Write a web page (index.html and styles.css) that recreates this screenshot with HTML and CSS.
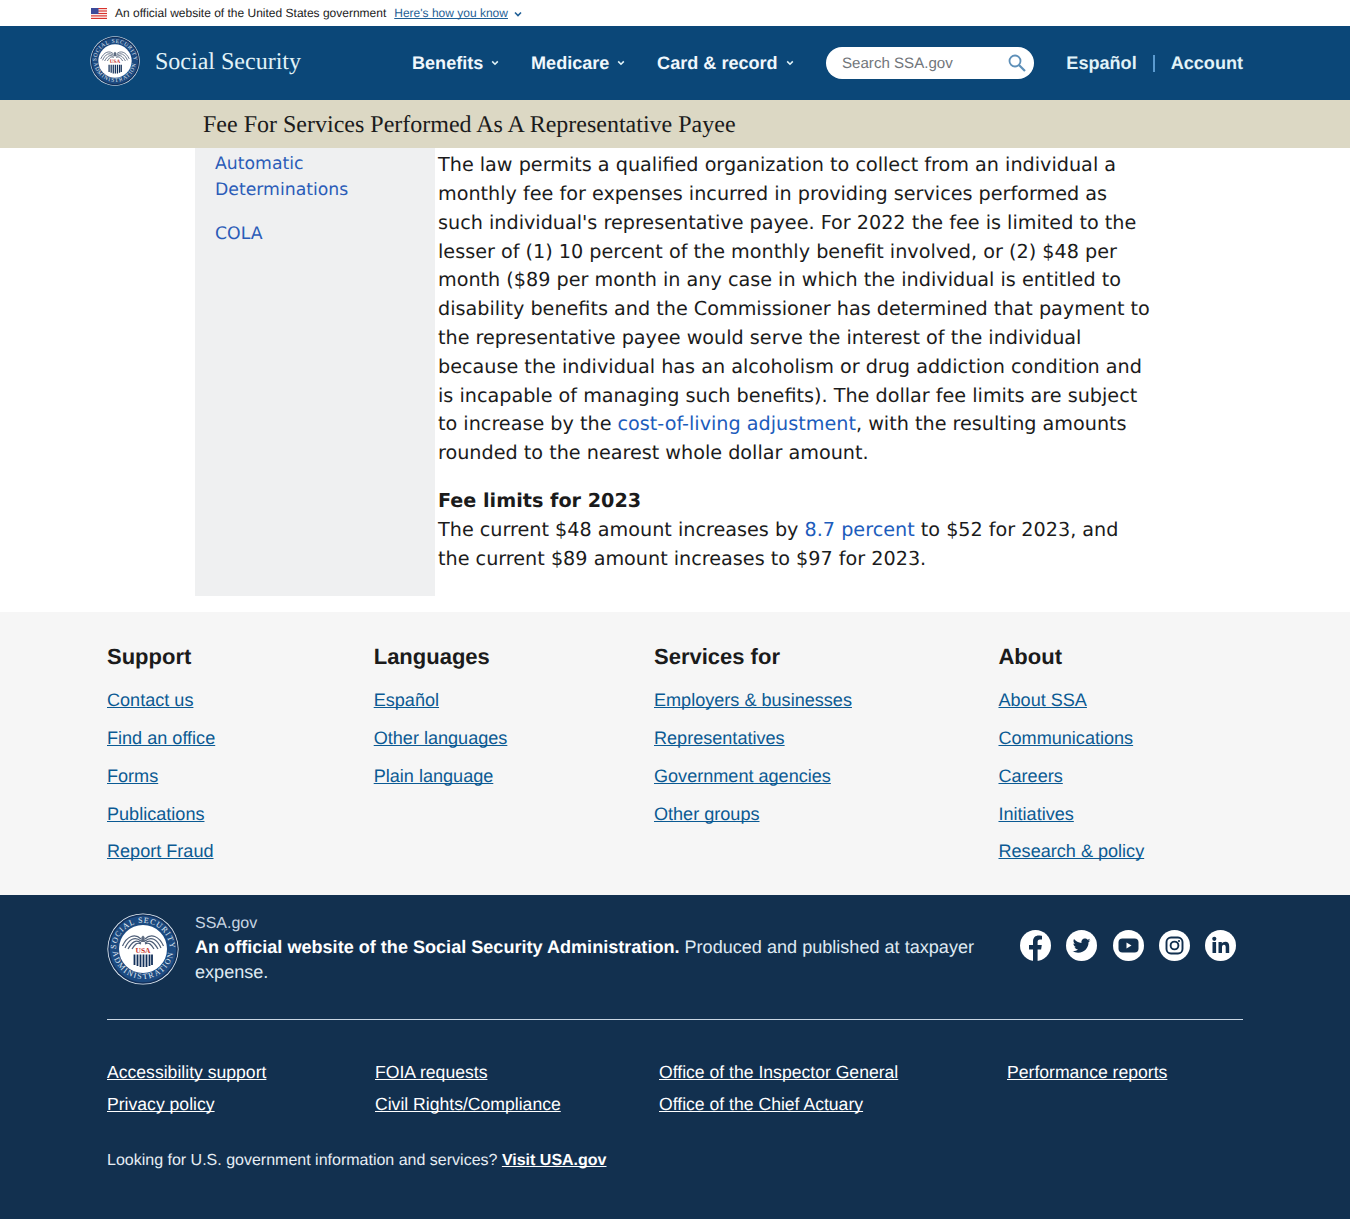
FILE: index.html
```html
<!DOCTYPE html>
<html lang="en">
<head>
    <meta charset="UTF-8">
    <meta name="viewport" content="width=device-width, initial-scale=1.0">
    <title>Fee For Services Performed As A Representative Payee</title>
    <link rel="stylesheet" href="styles.css">
</head>
<body>

    <div class="gov-banner">
        <svg class="flag" width="16" height="11" viewBox="0 0 16 11">
            <rect width="16" height="11" fill="#fff"/>
            <rect width="16" height="1.2" fill="#d8322c"/>
            <rect y="2.4" width="16" height="1.2" fill="#d8322c"/>
            <rect y="4.9" width="16" height="1.2" fill="#d8322c"/>
            <rect y="7.3" width="16" height="1.2" fill="#d8322c"/>
            <rect y="9.8" width="16" height="1.2" fill="#d8322c"/>
            <rect width="7.5" height="6" fill="#3c4a9a"/>
        </svg>
        <span class="gov-text">An official website of the United States government</span>
        <a class="gov-link" href="#">Here's how you know</a>
        <svg class="gov-chevron" width="10" height="10" viewBox="0 0 10 10"><path d="M2 3.5 L5 6.5 L8 3.5" fill="none" stroke="#1f5f96" stroke-width="1.6"/></svg>
    </div>

    <header class="site-header">
        <a class="brand" href="#">
            <svg class="seal" width="50" height="50" viewBox="0 0 72 72">
                <use href="#ssa-seal"/>
            </svg>
            <span class="brand-name">Social Security</span>
        </a>
        <nav class="main-nav">
            <a href="#">Benefits <svg width="10" height="10" viewBox="0 0 10 10"><path d="M2.2 3.4 L5 6.2 L7.8 3.4" fill="none" stroke="#e1f3f8" stroke-width="1.6"/></svg></a>
            <a href="#">Medicare <svg width="10" height="10" viewBox="0 0 10 10"><path d="M2.2 3.4 L5 6.2 L7.8 3.4" fill="none" stroke="#e1f3f8" stroke-width="1.6"/></svg></a>
            <a href="#">Card &amp; record <svg width="10" height="10" viewBox="0 0 10 10"><path d="M2.2 3.4 L5 6.2 L7.8 3.4" fill="none" stroke="#e1f3f8" stroke-width="1.6"/></svg></a>
        </nav>
        <form class="search">
            <span class="search-text">Search SSA.gov</span>
            <svg width="20" height="20" viewBox="0 0 20 20"><circle cx="8" cy="8" r="5.5" fill="none" stroke="#5d8fb8" stroke-width="1.8"/><path d="M12 12 L18 18" stroke="#5d8fb8" stroke-width="2.2"/></svg>
        </form>
        <div class="utility">
            <a href="#">Español</a>
            <span class="divider"></span>
            <a href="#">Account</a>
        </div>
    </header>

    <div class="title-bar">
        <h1>Fee For Services Performed As A Representative Payee</h1>
    </div>

    <main class="content">
        <aside class="side-nav">
            <a href="#">Automatic Determinations</a>
            <a href="#">COLA</a>
        </aside>
        <article class="article">
            <p>The law permits a qualified organization to collect from an individual a monthly fee for expenses incurred in providing services performed as such individual's representative payee. For 2022 the fee is limited to the lesser of (1) 10 percent of the monthly benefit involved, or (2) $48 per month ($89 per month in any case in which the individual is entitled to disability benefits and the Commissioner has determined that payment to the representative payee would serve the interest of the individual because the individual has an alcoholism or drug addiction condition and is incapable of managing such benefits). The dollar fee limits are subject to increase by the <a href="#">cost-of-living adjustment</a>, with the resulting amounts rounded to the nearest whole dollar amount.</p>
            <p><strong>Fee limits for 2023</strong><br>The current $48 amount increases by <a href="#">8.7 percent</a> to $52 for 2023, and the current $89 amount increases to $97 for 2023.</p>
        </article>
    </main>

    <section class="footer-links">
        <div class="footer-col">
            <h3>Support</h3>
            <a href="#">Contact us</a>
            <a href="#">Find an office</a>
            <a href="#">Forms</a>
            <a href="#">Publications</a>
            <a href="#">Report Fraud</a>
        </div>
        <div class="footer-col">
            <h3>Languages</h3>
            <a href="#">Español</a>
            <a href="#">Other languages</a>
            <a href="#">Plain language</a>
        </div>
        <div class="footer-col">
            <h3>Services for</h3>
            <a href="#">Employers &amp; businesses</a>
            <a href="#">Representatives</a>
            <a href="#">Government agencies</a>
            <a href="#">Other groups</a>
        </div>
        <div class="footer-col">
            <h3>About</h3>
            <a href="#">About SSA</a>
            <a href="#">Communications</a>
            <a href="#">Careers</a>
            <a href="#">Initiatives</a>
            <a href="#">Research &amp; policy</a>
        </div>
    </section>

    <footer class="site-footer">
        <div class="identity">
            <svg class="footer-seal" width="72" height="72" viewBox="0 0 72 72">
                <defs>
                    <g id="ssa-seal">
                        <circle cx="36" cy="36" r="35.6" fill="#e8f0f7"/>
                        <circle cx="36" cy="36" r="34.8" fill="#12305a"/>
                        <circle cx="36" cy="36" r="33.2" fill="#1c4a80"/>
                        <circle cx="36" cy="36" r="24" fill="#fff"/>
                        <path id="seal-top" d="M9.5 42 A27 27 0 1 1 62.5 42" fill="none"/>
                        <path id="seal-bottom" d="M6 30 A30.5 30.5 0 1 0 66 30" fill="none"/>
                        <text class="seal-text"><textPath href="#seal-top" startOffset="50%" text-anchor="middle">SOCIAL SECURITY</textPath></text>
                        <text class="seal-text seal-text-wide"><textPath href="#seal-bottom" startOffset="50%" text-anchor="middle">ADMINISTRATION</textPath></text>
                        <path d="M34.5 24 L36 22.5 L37.5 24 L38 29 L34 29 Z" fill="#5d6b80"/>
                        <path d="M34 26 C28 20 20 23 15.5 33 M34 28 C28 23 22 26 18 35 M34 30 C29 26 25 29 21 36 M34 31 C30 29 28 31 25 36 M38 26 C44 20 52 23 56.5 33 M38 28 C44 23 50 26 54 35 M38 30 C43 26 47 29 51 36 M38 31 C42 29 44 31 47 36" fill="none" stroke="#4f5f78" stroke-width="1.2"/>
                        <text class="seal-usa" x="36" y="39.5" text-anchor="middle">USA</text>
                        <path d="M27.5 41.5 V52 M30.5 41.5 V53 M33.5 41.5 V54 M36.5 41.5 V54 M39.5 41.5 V54 M42.5 41.5 V53 M45 41.5 V52" stroke="#12305a" stroke-width="1.8"/>
                    </g>
                </defs>
                <use href="#ssa-seal"/>
            </svg>
            <div class="identity-text">
                <div class="identity-site">SSA.gov</div>
                <div class="identity-line"><strong>An official website of the Social Security Administration.</strong> Produced and published at taxpayer expense.</div>
            </div>
            <div class="social">
                <svg width="31" height="31" viewBox="0 0 31 31"><circle cx="15.5" cy="15.5" r="15.5" fill="#fff"/><path d="M13 31 V19.5 H9 V15 H13 V11.5 C13 7.6 15.3 5.5 18.8 5.5 C20.5 5.5 22 5.8 22 5.8 V9.6 H20 C18.1 9.6 17.6 10.8 17.6 12 V15 H21.8 L21.1 19.5 H17.6 V31 Z" fill="#12304f"/></svg>
                <svg width="31" height="31" viewBox="0 0 31 31"><circle cx="15.5" cy="15.5" r="15.5" fill="#fff"/><path d="M24.5 10.2 C23.8 10.5 23.1 10.7 22.4 10.8 C23.2 10.3 23.7 9.6 24 8.8 C23.3 9.2 22.5 9.5 21.7 9.7 C21 9 20 8.5 19 8.5 C16.7 8.5 15 10.6 15.5 12.9 C12.5 12.7 9.8 11.3 8 9 C7 10.7 7.5 12.8 9.1 13.9 C8.5 13.9 7.9 13.7 7.4 13.4 C7.4 15.1 8.6 16.7 10.3 17 C9.8 17.2 9.2 17.2 8.6 17.1 C9.1 18.6 10.4 19.6 12 19.6 C10.4 20.8 8.5 21.3 6.6 21.1 C8.2 22.1 10.1 22.7 12.1 22.7 C18.6 22.7 22.7 17.2 22.5 12.2 C23.3 11.6 24 11 24.5 10.2 Z" fill="#12304f"/></svg>
                <svg width="31" height="31" viewBox="0 0 31 31"><circle cx="15.5" cy="15.5" r="15.5" fill="#fff"/><rect x="5.5" y="8.5" width="20" height="14" rx="4" fill="#12304f"/><path d="M13.5 12.5 L18.5 15.5 L13.5 18.5 Z" fill="#fff"/></svg>
                <svg width="31" height="31" viewBox="0 0 31 31"><circle cx="15.5" cy="15.5" r="15.5" fill="#fff"/><rect x="7.5" y="7.5" width="16" height="16" rx="4.5" fill="none" stroke="#12304f" stroke-width="1.9"/><circle cx="15.5" cy="15.5" r="3.9" fill="none" stroke="#12304f" stroke-width="1.9"/><circle cx="20" cy="11" r="1.1" fill="#12304f"/></svg>
                <svg width="31" height="31" viewBox="0 0 31 31"><circle cx="15.5" cy="15.5" r="15.5" fill="#fff"/><rect x="7.5" y="12" width="3.6" height="11" fill="#12304f"/><circle cx="9.3" cy="8.8" r="2.1" fill="#12304f"/><path d="M13.5 12 H16.8 V13.6 C17.5 12.4 18.8 11.7 20.3 11.7 C23.2 11.7 24.2 13.6 24.2 16.5 V23 H20.7 V17.2 C20.7 15.7 20.3 14.7 18.9 14.7 C17.6 14.7 17 15.7 17 17.2 V23 H13.5 Z" fill="#12304f"/></svg>
            </div>
        </div>
        <hr class="footer-rule">
        <div class="legal-links">
            <a href="#">Accessibility support</a>
            <a href="#">FOIA requests</a>
            <a href="#">Office of the Inspector General</a>
            <a href="#">Performance reports</a>
            <a href="#">Privacy policy</a>
            <a href="#">Civil Rights/Compliance</a>
            <a href="#">Office of the Chief Actuary</a>
        </div>
        <p class="usa-gov">Looking for U.S. government information and services? <a href="#">Visit USA.gov</a></p>
    </footer>

</body>
</html>
```

FILE: styles.css
```css
body {
    font-family: "Liberation Sans", Arial, sans-serif;
    margin: 0;
    padding: 0;
    background-color: #fff;
    color: #1b1b1b;
    text-rendering: geometricPrecision;
}
a {
    text-decoration-skip-ink: none;
}

/* top banner */
.gov-banner {
    height: 26px;
    padding-left: 91px;
    display: flex;
    align-items: center;
    font-size: 12px;
    box-sizing: border-box;
}
.flag {
    margin-right: 8px;
}
.gov-link {
    margin-left: 8px;
    color: #1f5f96;
}
.gov-chevron {
    margin-left: 5px;
    margin-top: 2px;
}

/* header */
.site-header {
    height: 74px;
    background-color: #0b4778;
    display: flex;
    align-items: center;
    padding: 0 107px 0 90px;
}
.brand {
    display: flex;
    align-items: center;
    text-decoration: none;
    width: 322px;
    flex: none;
}
.seal {
    flex: none;
    margin-top: -4px;
}
.brand-name {
    margin-left: 15px;
    margin-top: -2px;
    font-family: "Liberation Serif", serif;
    font-size: 24px;
    color: #e1f3f8;
}
.main-nav {
    display: flex;
    gap: 30.7px;
    width: 414px;
    flex: none;
}
.main-nav a {
    display: flex;
    align-items: center;
    gap: 7px;
    color: #f0f7fc;
    font-size: 18.08px;
    font-weight: bold;
    text-decoration: none;
}
.search {
    width: 208px;
    height: 32px;
    flex: none;
    margin: 0;
    padding: 0 7px 0 16px;
    box-sizing: border-box;
    display: flex;
    align-items: center;
    justify-content: space-between;
    background-color: #fff;
    border-radius: 16px;
    color: #71767a;
    font-size: 15.1px;
}
.utility {
    margin-left: auto;
    display: flex;
    align-items: center;
    gap: 16px;
}
.utility a {
    color: #e1f3f8;
    font-size: 18.08px;
    font-weight: bold;
    text-decoration: none;
}
.divider {
    width: 2px;
    height: 17px;
    background-color: #5b9bd0;
}

/* page title */
.title-bar {
    height: 48px;
    box-sizing: border-box;
    padding: 2px 0 0 203px;
    background-color: #dcd8c4;
    display: flex;
    align-items: center;
}
h1 {
    margin: 0;
    font-family: "Liberation Serif", serif;
    font-size: 24px;
    font-weight: normal;
}

/* main content */
.content {
    display: flex;
    margin-left: 195px;
    height: 448px;
}
.side-nav {
    width: 240px;
    flex: none;
    background-color: #eff0f1;
    padding: 3px 20px 0;
    box-sizing: border-box;
    font-family: "DejaVu Sans", Verdana, sans-serif;
    font-size: 17.28px;
    line-height: 26px;
}
.side-nav a {
    display: block;
    margin-bottom: 18px;
    color: #2b5cb8;
    text-decoration: none;
}
.article {
    width: 716px;
    margin-left: 3px;
    font-family: "DejaVu Sans", Verdana, sans-serif;
    font-size: 19.2px;
    line-height: 28.8px;
}
.article p {
    margin: 3.3px 0 19px;
}
.article a {
    color: #1c5cbc;
    text-decoration: none;
}

/* footer link columns */
.footer-links {
    margin-top: 16px;
    height: 283px;
    box-sizing: border-box;
    background-color: #f6f6f6;
    padding: 32px 107px 0;
    display: grid;
    grid-template-columns: 266.7px 280.3px 344.5px 1fr;
}
.footer-col h3 {
    margin: 0 0 20.2px;
    font-size: 22px;
    line-height: 26px;
}
.footer-col a {
    display: block;
    color: #0b5a93;
    font-size: 18.08px;
    line-height: 21px;
    margin-bottom: 16.8px;
}

/* dark footer */
.site-footer {
    background-color: #12304f;
    height: 324px;
    box-sizing: border-box;
    padding: 18px 107px 0;
    color: #fff;
}
.identity {
    display: flex;
    height: 106px;
}
.footer-seal {
    flex: none;
}
.seal-text {
    font-family: "Liberation Serif", serif;
    font-size: 8px;
    letter-spacing: 0.9px;
    fill: #e3edf6;
}
.seal-text-wide {
    letter-spacing: 1.5px;
}
.seal-usa {
    font-family: "Liberation Serif", serif;
    font-size: 7.5px;
    font-weight: bold;
    fill: #c8322c;
}
.identity-text {
    width: 800px;
    margin-left: 16px;
    flex: none;
    font-size: 18.08px;
    line-height: 25px;
    color: #dfe9f2;
}
.identity-site {
    font-size: 16px;
    line-height: 20px;
    padding-top: 1px;
    margin-bottom: 1px;
    color: #c9d6e3;
}
.identity-line strong {
    color: #fff;
}
.social {
    margin-left: auto;
    margin-right: 7px;
    margin-top: 17px;
    display: flex;
    gap: 15.25px;
    align-items: flex-start;
}
.footer-rule {
    margin: 0;
    border: none;
    border-top: 1px solid #c9d6e3;
}
.legal-links {
    margin-top: 42px;
    display: grid;
    grid-template-columns: 268px 284px 348px 1fr;
    row-gap: 11px;
}
.legal-links a {
    color: #fff;
    font-size: 17.6px;
    line-height: 21px;
}
.usa-gov {
    margin: 36px 0 0;
    font-size: 16px;
    line-height: 20px;
    color: #e6edf4;
}
.usa-gov a {
    color: #fff;
    font-weight: bold;
}
```
